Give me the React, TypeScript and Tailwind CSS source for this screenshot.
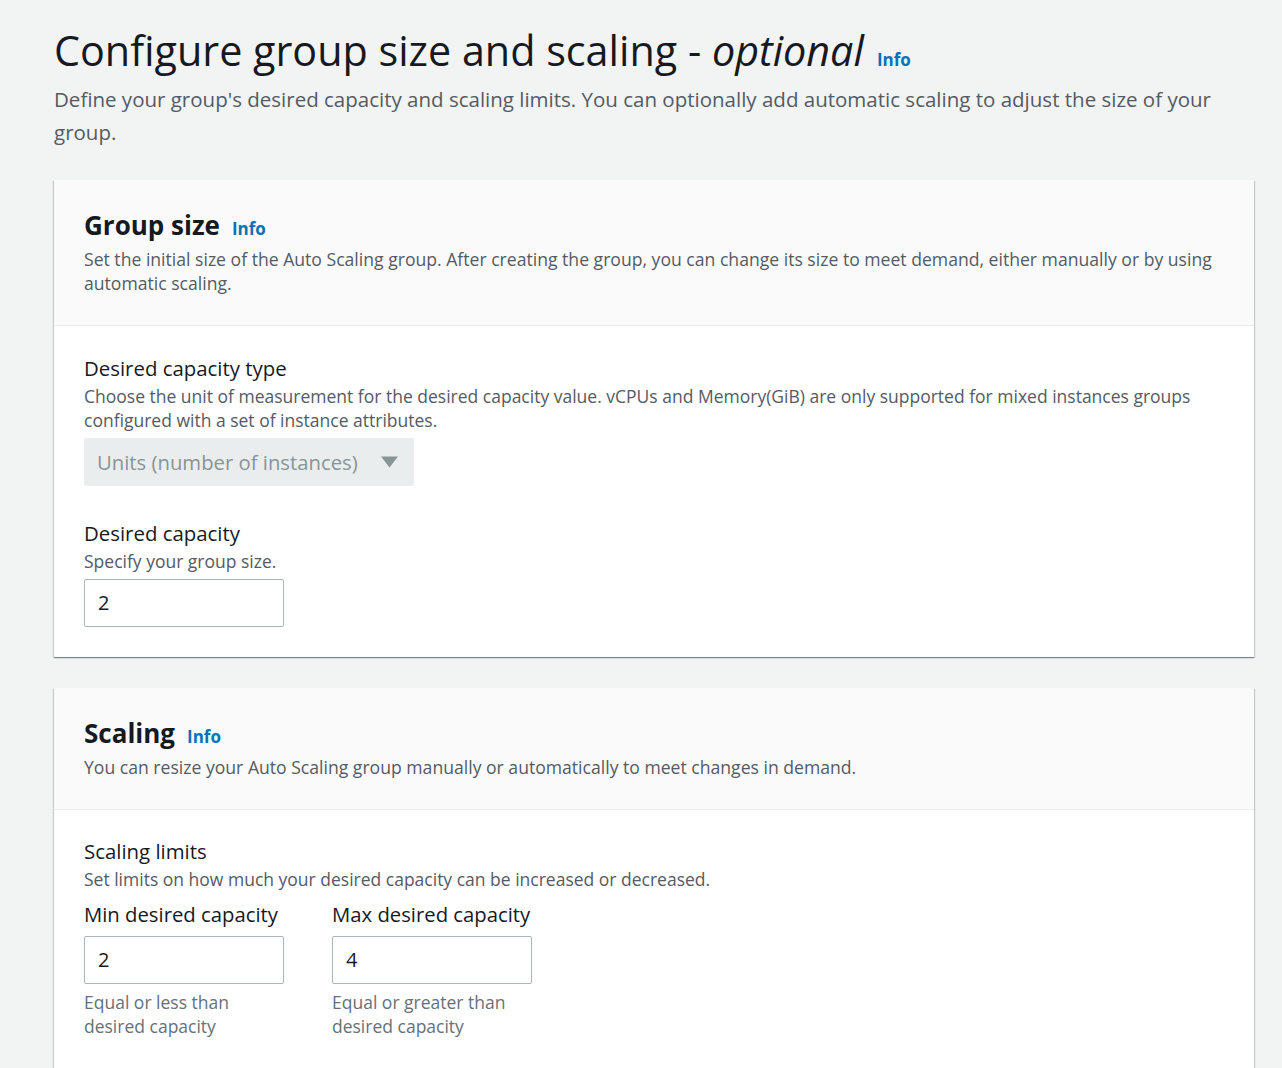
import React from 'react';

const font = { fontFamily: '"Open Sans", "Noto Sans", sans-serif' };

const Info = ({ className = '' }: { className?: string }) => (
  <a className={`font-bold text-[#0073bb] text-[17px] ${className}`}>Info</a>
);

const Field = ({ label, hint }: { label: string; hint?: string }) => (
  <div>
    <div className="text-[20.4px] leading-[28px] text-[#16191f]">{label}</div>
    {hint && <div className="mt-[2px] text-[17.5px] leading-[24px] text-[#545b64]">{hint}</div>}
  </div>
);

const TextInput = ({ value }: { value: string }) => (
  <div className="w-[200px] h-[48px] border border-[#aab7b8] rounded-[2px] bg-white flex items-center px-[13px] text-[20px] text-[#16191f]">
    {value}
  </div>
);

const Panel = ({
  title,
  desc,
  children,
}: {
  title: string;
  desc: React.ReactNode;
  children: React.ReactNode;
}) => (
  <section className="bg-white shadow-[0_1px_1px_0_rgba(0,28,36,0.3),1px_1px_1px_0_rgba(0,28,36,0.15),-1px_1px_1px_0_rgba(0,28,36,0.15)]">
    <header className="bg-[#fafafa] border-b border-[#eaeded] px-[30px] pt-[26px] pb-[30px]">
      <div className="flex items-baseline gap-[12px]">
        <h2 className="text-[26px] leading-[38px] font-bold text-[#16191f]">{title}</h2>
        <Info />
      </div>
      <p className="mt-[3px] text-[17.6px] leading-[24px] text-[#545b64]">{desc}</p>
    </header>
    <div className="px-[30px]">{children}</div>
  </section>
);

const Limit = ({ label, value, help }: { label: string; value: string; help: string }) => (
  <div>
    <div className="text-[20.3px] leading-[30px] text-[#16191f]">{label}</div>
    <div className="mt-[7px]">
      <TextInput value={value} />
    </div>
    <div className="mt-[6px] text-[17.5px] leading-[24px] text-[#687078] w-[200px]">{help}</div>
  </div>
);

export default function App() {
  return (
    <div style={font} className="min-h-screen bg-[#f2f3f3] px-[54px] pt-[22px] pb-[40px] overflow-hidden">
      <div className="flex items-baseline gap-[13px]">
        <h1 className="text-[41.3px] leading-[56px] text-[#16191f]">
          Configure group size and scaling - <i>optional</i>
        </h1>
        <Info />
      </div>
      <p className="text-[20.5px] leading-[33px] text-[#545b64] mt-[5px]">
        Define your group's desired capacity and scaling limits. You can optionally add automatic scaling to adjust the
        size of your group.
      </p>

      <div className="mt-[31px] flex flex-col gap-[31px] w-[1200px]">
        <Panel
          title="Group size"
          desc="Set the initial size of the Auto Scaling group. After creating the group, you can change its size to meet demand, either manually or by using automatic scaling."
        >
          <div className="pt-[28px] pb-[30px]">
            <Field
              label="Desired capacity type"
              hint="Choose the unit of measurement for the desired capacity value. vCPUs and Memory(GiB) are only supported for mixed instances groups configured with a set of instance attributes."
            />
            <div className="mt-[6px] w-[330px] h-[48px] bg-[#eaeded] rounded-[2px] flex items-center justify-between pl-[13px] pr-[16px] text-[20.3px] text-[#879596]">
              <span>Units (number of instances)</span>
              <svg width="17" height="12" viewBox="0 0 17 12">
                <path d="M0 0.5h17L8.5 11.5z" fill="#879596" />
              </svg>
            </div>
            <div className="mt-[33px]">
              <Field label="Desired capacity" hint="Specify your group size." />
            </div>
            <div className="mt-[6px]">
              <TextInput value="2" />
            </div>
          </div>
        </Panel>

        <Panel title="Scaling" desc="You can resize your Auto Scaling group manually or automatically to meet changes in demand.">
          <div className="pt-[27px] pb-[30px]">
            <Field label="Scaling limits" hint="Set limits on how much your desired capacity can be increased or decreased." />
            <div className="mt-[8px] flex gap-[48px]">
              <Limit label="Min desired capacity" value="2" help="Equal or less than desired capacity" />
              <Limit label="Max desired capacity" value="4" help="Equal or greater than desired capacity" />
            </div>
          </div>
        </Panel>
      </div>
    </div>
  );
}
